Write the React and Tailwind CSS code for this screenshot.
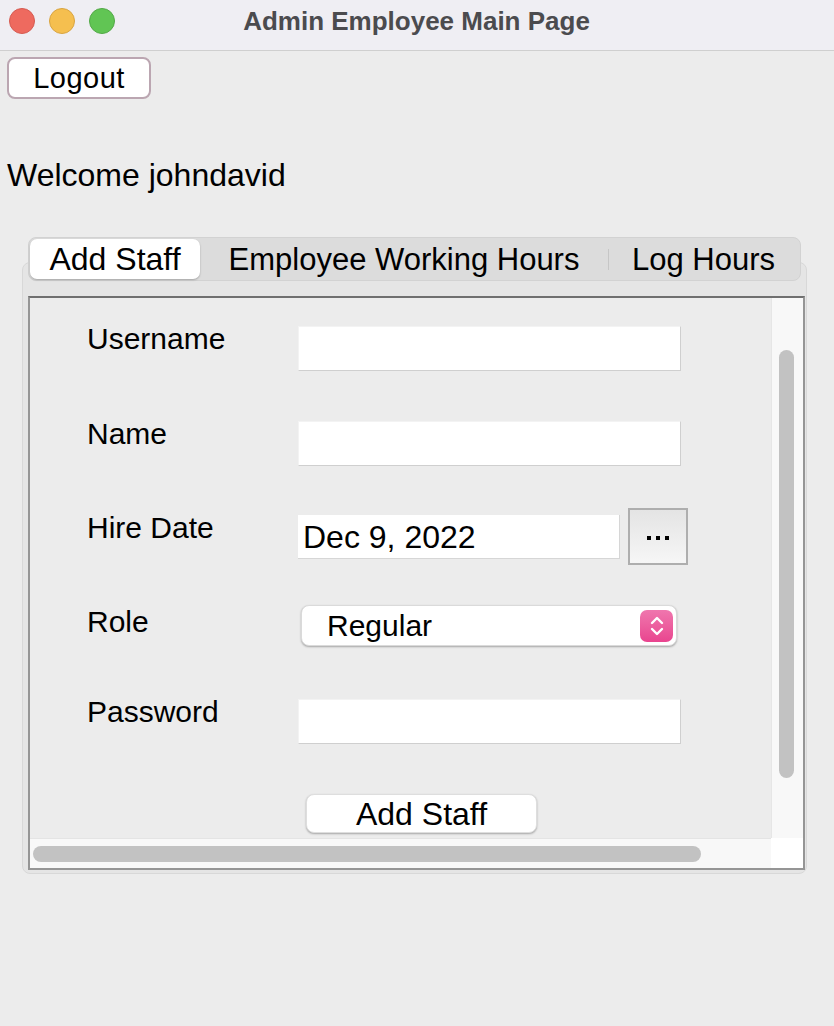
import React from 'react';

const Field = ({ className = '' }) => (
    <div className={`h-[45px] w-[383px] bg-white border-b border-r border-[#cfcfcf] border-t border-t-[#f3f3f3] border-l border-l-[#f3f3f3] ${className}`}></div>
);

const Label = ({ children }) => (
    <div className="w-[268px] h-[36px] pl-[57px] text-[30px] leading-[36px] shrink-0">{children}</div>
);

const App = () => {
    return (
        <div className="min-h-screen bg-[#ececec] font-['Liberation_Sans',Arial,sans-serif] text-black">
            {/* barra de titulo */}
            <div className="h-[51px] bg-[#efeef3] border-b border-[#cfcfcf] flex items-center relative">
                <div className="flex items-center pl-[9px] gap-[14px] -mt-[8px]">
                    <div className="w-[26px] h-[26px] rounded-full bg-[#ee6a5f] border border-[#d65a50]"></div>
                    <div className="w-[26px] h-[26px] rounded-full bg-[#f5bf4f] border border-[#d9a440]"></div>
                    <div className="w-[26px] h-[26px] rounded-full bg-[#61c554] border border-[#52a946]"></div>
                </div>
                <div className="flex-1 text-center pr-[116px] -mt-[8px] font-bold text-[26px] leading-[30px] text-[#4b4b4e]">
                    Admin Employee Main Page
                </div>
            </div>

            {/* Logout */}
            <button className="ml-[7px] mt-[6px] w-[144px] h-[42px] border-2 border-[#bba6b1] rounded-[8px] bg-white text-[29px] leading-[36px] tracking-[0.5px]">
                Logout
            </button>

            <div className="ml-[7px] mt-[58px] text-[32px] leading-[36px]">Welcome johndavid</div>

            {/* Tabs */}
            <div className="ml-[22px] w-[785px] mt-[44px]">
                <div className="relative z-10 mx-[6px] h-[44px] rounded-[8px] bg-[#dcdcdc] border border-[#d2d2d2] flex items-center pl-[1px] text-[31px]">
                    <div className="w-[170px] h-[40px] rounded-[7px] bg-white shadow-[0_1px_2px_rgba(0,0,0,0.25)] flex items-center justify-center leading-none text-[32px]">
                        Add Staff
                    </div>
                    <div className="w-[408px] flex items-center justify-center leading-none">Employee Working Hours</div>
                    <div className="w-px h-[21px] bg-[#c6c6c6]"></div>
                    <div className="flex-1 flex items-center justify-center leading-none pr-[2px]">Log Hours</div>
                </div>

                <div className="-mt-[19px] h-[612px] rounded-[8px] bg-[#e5e5e5] border border-[#d8d8d8] pt-[33px] pl-[5px] pr-[1px]">
                    {/* scroll pane */}
                    <div className="h-[574px] border-2 border-[#959595] border-t-[#6f6f6f] grid grid-cols-[1fr_32px] grid-rows-[1fr_30px]">
                        <div className="bg-[#ececec] pt-[23px] flex flex-col">
                            <div className="flex items-start h-[95px]">
                                <Label>Username</Label>
                                <Field className="mt-[5px]" />
                            </div>
                            <div className="flex items-start h-[94px]">
                                <Label>Name</Label>
                                <Field className="mt-[5px]" />
                            </div>
                            <div className="flex items-start h-[94px]">
                                <Label>Hire Date</Label>
                                <div className="mt-[5px] h-[44px] w-[322px] bg-white border-b border-r border-[#d6d6d6] pl-[5px] text-[32px] leading-[44px]">
                                    Dec 9, 2022
                                </div>
                                <div className="-mt-[2px] ml-[8px] w-[60px] h-[57px] border-2 border-[#aeaeae] bg-gradient-to-b from-[#e4e4e4] to-[#f6f6f6] flex items-center justify-center gap-[5px] pt-[2px]">
                                    <span className="w-[4px] h-[4px] bg-black"></span>
                                    <span className="w-[4px] h-[4px] bg-black"></span>
                                    <span className="w-[4px] h-[4px] bg-black"></span>
                                </div>
                            </div>
                            <div className="flex items-start h-[90px]">
                                <Label>Role</Label>
                                <div className="mt-[1px] ml-[3px] w-[376px] h-[41px] bg-white rounded-[8px] border border-[#dadada] shadow-[0_1px_2px_rgba(0,0,0,0.3)] flex items-center justify-between pl-[25px] pr-[3px]">
                                    <span className="text-[30px] leading-none">Regular</span>
                                    <div className="w-[33px] h-[32px] rounded-[7px] bg-gradient-to-b from-[#ef76ae] to-[#e9448f] flex items-center justify-center">
                                        <svg width="16" height="24" viewBox="0 0 16 24" fill="none" stroke="white" strokeWidth="2.4" strokeLinecap="round" strokeLinejoin="round">
                                            <path d="M3 9 L8 4 L13 9" />
                                            <path d="M3 15 L8 20 L13 15" />
                                        </svg>
                                    </div>
                                </div>
                            </div>
                            <div className="flex items-start h-[100px]">
                                <Label>Password</Label>
                                <Field className="mt-[5px]" />
                            </div>
                            <button className="ml-[276px] w-[231px] h-[39px] bg-white rounded-[8px] border border-[#dedede] shadow-[0_1px_2px_rgba(0,0,0,0.3)] text-[32px] leading-none">
                                Add Staff
                            </button>
                        </div>

                        {/* scrollbar vertical */}
                        <div className="bg-[#f8f8f8] border-l border-[#e6e6e6] pt-[52px] pl-[7px]">
                            <div className="w-[15px] h-[428px] rounded-full bg-[#c2c2c2]"></div>
                        </div>

                        {/* scrollbar horizontal */}
                        <div className="bg-[#f8f8f8] border-t border-[#e4e4e4] pt-[7px] pl-[3px]">
                            <div className="w-[668px] h-[16px] rounded-full bg-[#c2c2c2]"></div>
                        </div>
                        <div className="bg-white"></div>
                    </div>
                </div>
            </div>
        </div>
    );
};

export default App;
